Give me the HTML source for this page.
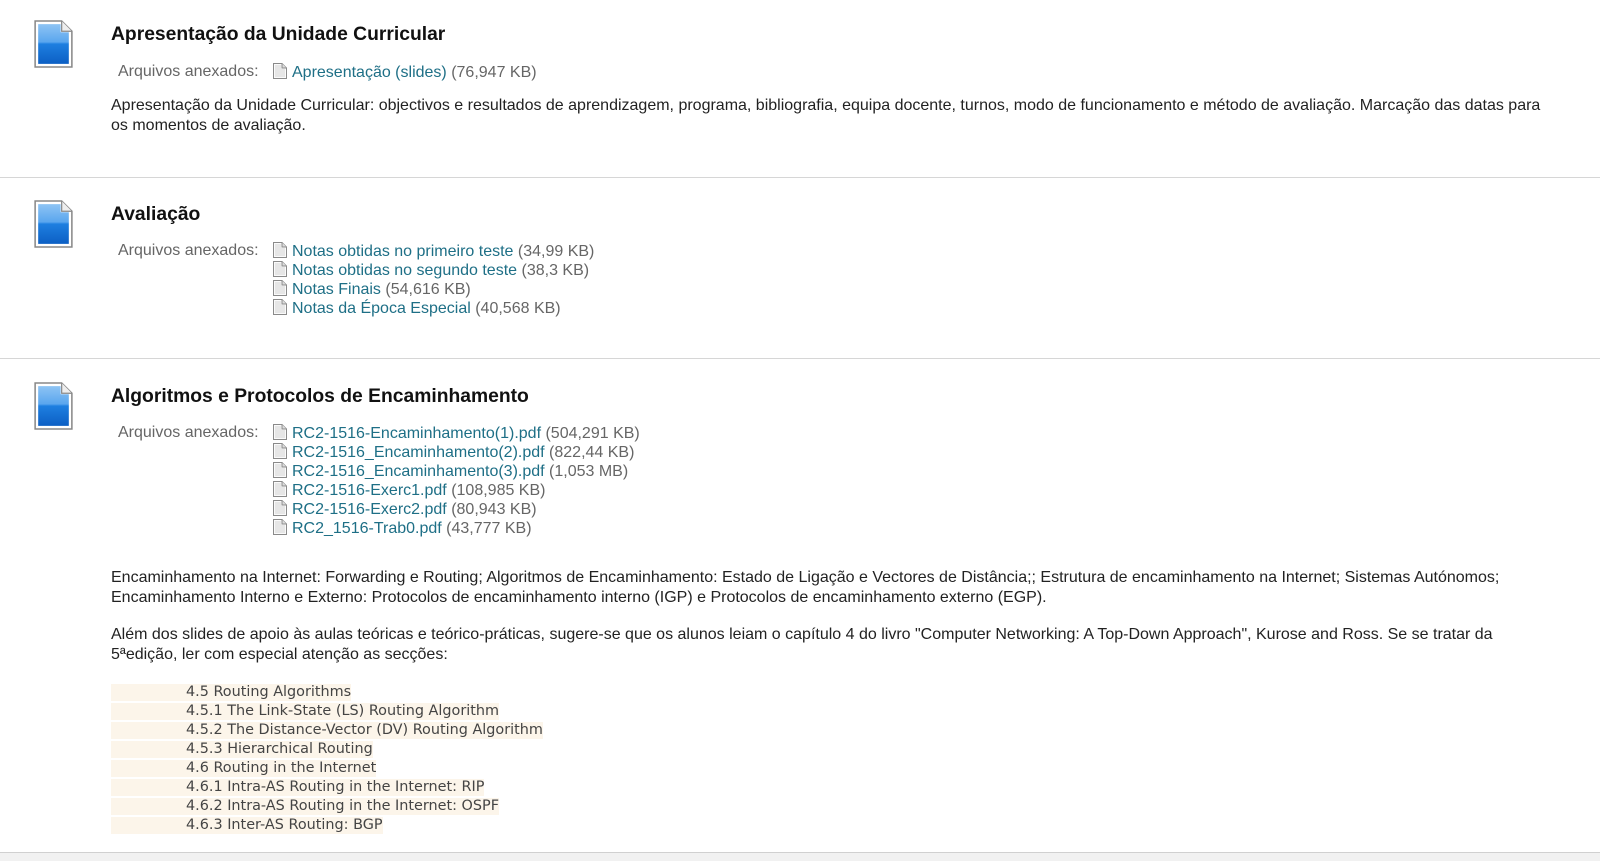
<!DOCTYPE html>
<html><head><meta charset="utf-8">
<style>
*{margin:0;padding:0}
body{width:1600px;height:860px;background:#fff;font-family:"Liberation Sans",Arial,sans-serif;font-size:16px;color:#222;position:relative;overflow:hidden}
.a{position:absolute;white-space:nowrap}
h2{position:absolute;left:111px;font-size:19.3px;font-weight:bold;color:#111;white-space:nowrap}
.lab{color:#666;left:118px}
.f{position:absolute;left:273px;white-space:nowrap;line-height:19px;color:#666}
.f a{color:#1e6f86;text-decoration:none}
.fi{display:inline-block;vertical-align:-2px;margin-right:5px}
.hr{position:absolute;left:0;width:1600px;height:1px;background:#d6d6d6}
.p{position:absolute;left:111px;width:1440px;line-height:19.5px;color:#222}
.code{position:absolute;left:111px;top:684px;font-family:"DejaVu Sans",Verdana,sans-serif;font-size:14.4px;color:#444}
.code div{background:#fcf5ea;height:17px;line-height:17px;margin-bottom:2px;padding-left:75px;width:max-content}
</style></head><body>
<svg width="0" height="0" style="position:absolute"><defs>
<linearGradient id="g" x1="0" y1="0" x2="0" y2="1"><stop offset="0" stop-color="#8ec4f4"/><stop offset="0.45" stop-color="#5aa6ee"/><stop offset="0.5" stop-color="#1e7fe0"/><stop offset="1" stop-color="#0c5fc4"/></linearGradient>
<symbol id="big" viewBox="0 0 38 47"><path d="M1 1H27L37 11V46H1Z" fill="#fff" stroke="#888" stroke-width="1.5"/><path d="M27 1V11H37" fill="#eee" stroke="#888" stroke-width="1.2"/><path d="M4 4H26V12H34V43H4Z" fill="url(#g)"/></symbol>
<symbol id="sm" viewBox="0 0 14 16"><path d="M0.5 0.5H9L13.5 5V15.5H0.5Z" fill="#fafafa" stroke="#8a8a8a"/><path d="M9 0.5V5H13.5" fill="#ddd" stroke="#8a8a8a"/><path d="M2 2H8V6H12V14H2Z" fill="#e6e6e6"/></symbol>
</defs></svg>

<svg class="a" style="left:34px;top:20px" width="39" height="48"><use href="#big"/></svg>
<h2 style="top:24px">Apresentação da Unidade Curricular</h2>
<div class="a lab" style="top:63px">Arquivos anexados:</div>
<div class="f" style="top:63px"><svg class="fi" width="14" height="16"><use href="#sm"/></svg><a>Apresentação (slides)</a> (76,947 KB)</div>
<div class="p" style="top:96px">Apresentação da Unidade Curricular: objectivos e resultados de aprendizagem, programa, bibliografia, equipa docente, turnos, modo de funcionamento e método de avaliação. Marcação das datas para os momentos de avaliação.</div>
<div class="hr" style="top:177px"></div>

<svg class="a" style="left:34px;top:200px" width="39" height="48"><use href="#big"/></svg>
<h2 style="top:204px">Avaliação</h2>
<div class="a lab" style="top:242px">Arquivos anexados:</div>
<div class="f" style="top:242px">
<div><svg class="fi" width="14" height="16"><use href="#sm"/></svg><a>Notas obtidas no primeiro teste</a> (34,99 KB)</div>
<div><svg class="fi" width="14" height="16"><use href="#sm"/></svg><a>Notas obtidas no segundo teste</a> (38,3 KB)</div>
<div><svg class="fi" width="14" height="16"><use href="#sm"/></svg><a>Notas Finais</a> (54,616 KB)</div>
<div><svg class="fi" width="14" height="16"><use href="#sm"/></svg><a>Notas da Época Especial</a> (40,568 KB)</div>
</div>
<div class="hr" style="top:358px"></div>

<svg class="a" style="left:34px;top:382px" width="39" height="48"><use href="#big"/></svg>
<h2 style="top:386px">Algoritmos e Protocolos de Encaminhamento</h2>
<div class="a lab" style="top:424px">Arquivos anexados:</div>
<div class="f" style="top:424px">
<div><svg class="fi" width="14" height="16"><use href="#sm"/></svg><a>RC2-1516-Encaminhamento(1).pdf</a> (504,291 KB)</div>
<div><svg class="fi" width="14" height="16"><use href="#sm"/></svg><a>RC2-1516_Encaminhamento(2).pdf</a> (822,44 KB)</div>
<div><svg class="fi" width="14" height="16"><use href="#sm"/></svg><a>RC2-1516_Encaminhamento(3).pdf</a> (1,053 MB)</div>
<div><svg class="fi" width="14" height="16"><use href="#sm"/></svg><a>RC2-1516-Exerc1.pdf</a> (108,985 KB)</div>
<div><svg class="fi" width="14" height="16"><use href="#sm"/></svg><a>RC2-1516-Exerc2.pdf</a> (80,943 KB)</div>
<div><svg class="fi" width="14" height="16"><use href="#sm"/></svg><a>RC2_1516-Trab0.pdf</a> (43,777 KB)</div>
</div>
<div class="p" style="top:568px">Encaminhamento na Internet: Forwarding e Routing; Algoritmos de Encaminhamento: Estado de Ligação e Vectores de Distância;; Estrutura de encaminhamento na Internet; Sistemas Autónomos; Encaminhamento Interno e Externo: Protocolos de encaminhamento interno (IGP) e Protocolos de encaminhamento externo (EGP).</div>
<div class="p" style="top:625px">Além dos slides de apoio às aulas teóricas e teórico-práticas, sugere-se que os alunos leiam o capítulo 4 do livro "Computer Networking: A Top-Down Approach", Kurose and Ross. Se se tratar da<br>5ªedição, ler com especial atenção as secções:</div>
<div class="code">
<div>4.5 Routing Algorithms</div>
<div>4.5.1 The Link-State (LS) Routing Algorithm</div>
<div>4.5.2 The Distance-Vector (DV) Routing Algorithm</div>
<div>4.5.3 Hierarchical Routing</div>
<div>4.6 Routing in the Internet</div>
<div>4.6.1 Intra-AS Routing in the Internet: RIP</div>
<div>4.6.2 Intra-AS Routing in the Internet: OSPF</div>
<div>4.6.3 Inter-AS Routing: BGP</div>
</div>
<div class="a" style="left:0;top:852px;width:1600px;height:8px;background:#f1f1f1;border-top:1px solid #d0d0d0"></div>
</body></html>
